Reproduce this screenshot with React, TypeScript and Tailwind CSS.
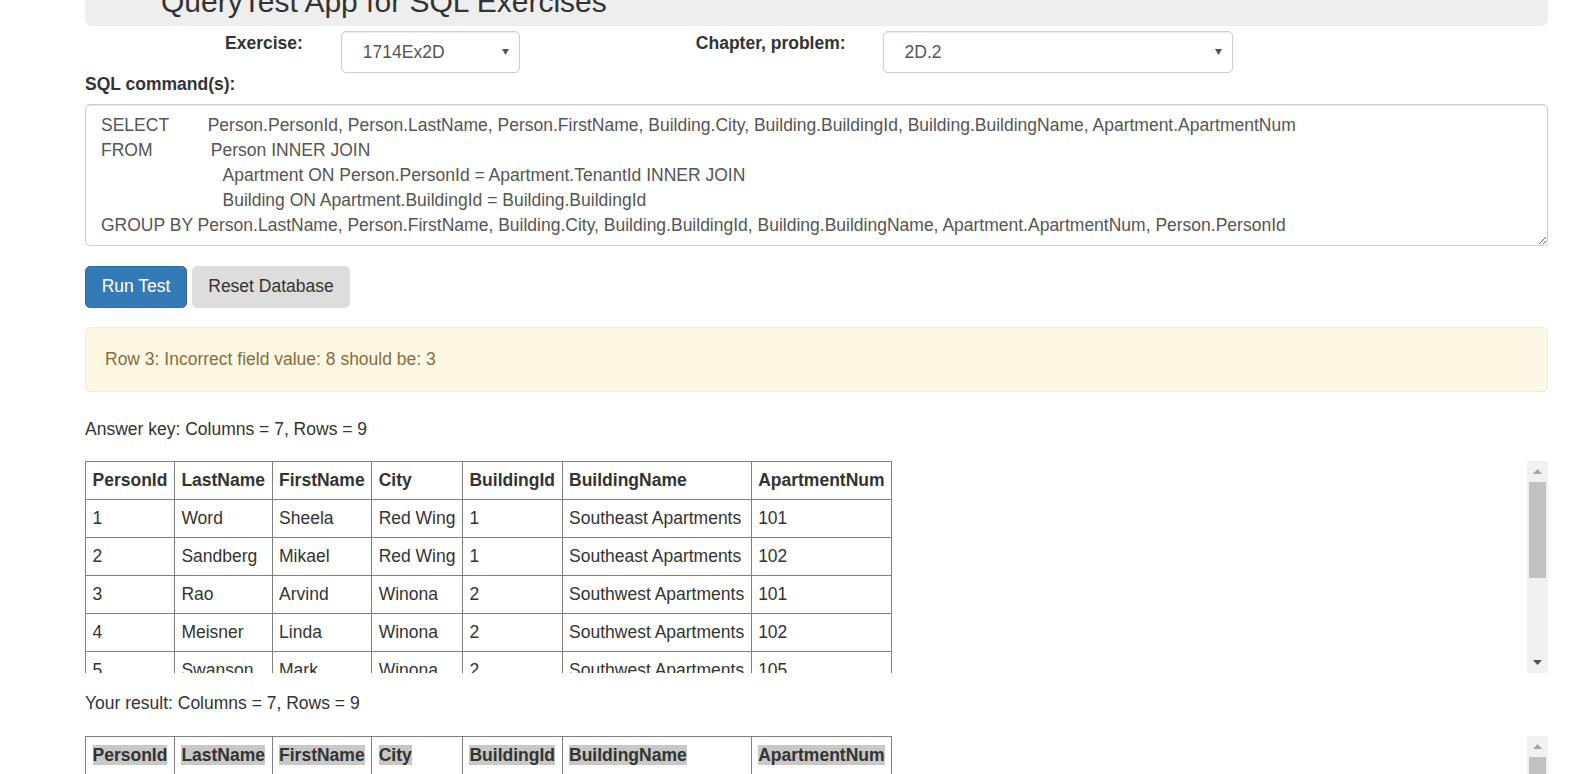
import React from "react"

type Row = [string, string, string, string, string, string, string]

const headers = ["PersonId", "LastName", "FirstName", "City", "BuildingId", "BuildingName", "ApartmentNum"]

const answerRows: Row[] = [
  ["1", "Word", "Sheela", "Red Wing", "1", "Southeast Apartments", "101"],
  ["2", "Sandberg", "Mikael", "Red Wing", "1", "Southeast Apartments", "102"],
  ["3", "Rao", "Arvind", "Winona", "2", "Southwest Apartments", "101"],
  ["4", "Meisner", "Linda", "Winona", "2", "Southwest Apartments", "102"],
  ["5", "Swanson", "Mark", "Winona", "2", "Southwest Apartments", "105"],
  ["6", "Weber", "Anne", "Winona", "2", "Southwest Apartments", "106"],
  ["7", "Nguyen", "Kim", "Red Wing", "1", "Southeast Apartments", "103"],
  ["8", "Olson", "Erik", "Red Wing", "1", "Southeast Apartments", "104"],
  ["9", "Berg", "Lisa", "Winona", "2", "Southwest Apartments", "103"],
]

const resultRows: Row[] = answerRows.map((r, i) => (i === 2 ? (["8", ...r.slice(1)] as Row) : r))

const sql = [
  "SELECT        Person.PersonId, Person.LastName, Person.FirstName, Building.City, Building.BuildingId, Building.BuildingName, Apartment.ApartmentNum",
  "FROM            Person INNER JOIN",
  "                         Apartment ON Person.PersonId = Apartment.TenantId INNER JOIN",
  "                         Building ON Apartment.BuildingId = Building.BuildingId",
  "GROUP BY Person.LastName, Person.FirstName, Building.City, Building.BuildingId, Building.BuildingName, Apartment.ApartmentNum, Person.PersonId",
].join("\n")

function Caret() {
  return (
    <svg width="7" height="6" viewBox="0 0 7 6">
      <path d="M0 0 L7 0 L3.5 6 Z" fill="#555" />
    </svg>
  )
}

function SelectBox({ value, width }: { value: string; width: string }) {
  return (
    <div
      className={`${width} h-[42px] flex items-center justify-between pl-[21px] pr-[10px] bg-white border border-[#ccc] rounded-[5px] shadow-[inset_0_1px_1px_rgba(0,0,0,0.075)] text-[#555]`}
    >
      <span>{value}</span>
      <Caret />
    </div>
  )
}

function Scrollbar({ thumb }: { thumb: string }) {
  return (
    <div className="w-[21px] shrink-0 bg-[#f1f1f1] flex flex-col">
      <div className="h-[21px] flex items-center justify-center">
        <svg width="9" height="5" viewBox="0 0 9 5">
          <path d="M0 5 L9 5 L4.5 0 Z" fill="#a3a3a3" />
        </svg>
      </div>
      <div className={`${thumb} mx-[2px] bg-[#c1c1c1]`} />
      <div className="flex-1" />
      <div className="h-[21px] flex items-center justify-center">
        <svg width="9" height="5" viewBox="0 0 9 5">
          <path d="M0 0 L9 0 L4.5 5 Z" fill="#505050" />
        </svg>
      </div>
    </div>
  )
}

function DataTable({ rows, marked }: { rows: Row[]; marked?: boolean }) {
  return (
    <table className="border-collapse">
      <thead>
        <tr>
          {headers.map((h) => (
            <th key={h} className="border border-[#808080] px-[6.5px] py-[6px] text-left font-bold whitespace-nowrap">
              {marked ? <span className="bg-[#c8c8c8]">{h}</span> : h}
            </th>
          ))}
        </tr>
      </thead>
      <tbody>
        {rows.map((r, i) => (
          <tr key={i}>
            {r.map((c, j) => (
              <td key={j} className="border border-[#808080] px-[6.5px] py-[6px] whitespace-nowrap">
                {c}
              </td>
            ))}
          </tr>
        ))}
      </tbody>
    </table>
  )
}

function ResultBox({ rows, marked, thumb }: { rows: Row[]; marked?: boolean; thumb: string }) {
  return (
    <div className="h-[212px] flex">
      <div className="flex-1 overflow-hidden">
        <DataTable rows={rows} marked={marked} />
      </div>
      <Scrollbar thumb={thumb} />
    </div>
  )
}

export default function App() {
  return (
    <div className="h-[774px] overflow-hidden bg-white font-['Liberation_Sans',Arial,sans-serif] text-[17.5px] leading-[25px] text-[#333]">
      <div className="ml-[85px] mr-[27px]">
        <div className="h-[26px] overflow-hidden bg-[#eee] rounded-b-[7px] pl-[76px]">
          <h1 className="mt-[-13px] text-[30px] leading-[30px] font-normal text-[#333] whitespace-nowrap">
            QueryTest App for SQL Exercises
          </h1>
        </div>

        <div className="mt-[5px] flex items-start">
          <label className="ml-[140px] font-bold">Exercise:</label>
          <div className="ml-[38px]">
            <SelectBox value="1714Ex2D" width="w-[179px]" />
          </div>
          <label className="ml-[176px] font-bold">Chapter, problem:</label>
          <div className="ml-[37px]">
            <SelectBox value="2D.2" width="w-[350px]" />
          </div>
        </div>

        <div className="-mt-[1px] mb-[7px] font-bold">SQL command(s):</div>
        <textarea
          readOnly
          value={sql}
          spellCheck={false}
          className="block w-full h-[142px] px-[15px] py-[7.5px] border border-[#ccc] rounded-[5px] shadow-[inset_0_1px_1px_rgba(0,0,0,0.075)] text-[#555] leading-[25px] outline-none resize-y overflow-hidden"
        />

        <div className="mt-[20px] flex gap-[5px]">
          <button className="w-[102px] h-[42px] pb-[2px] bg-[#337ab7] border border-[#2e6da4] rounded-[5px] text-white">
            Run Test
          </button>
          <button className="w-[158px] h-[42px] pb-[2px] bg-[#ddd] border border-[#ddd] rounded-[5px] text-[#333]">
            Reset Database
          </button>
        </div>

        <div className="mt-[19px] px-[19px] py-[19px] bg-[#fcf8e3] border border-[#faebcc] rounded-[5px] text-[#8a6d3b]">
          Row 3: Incorrect field value: 8 should be: 3
        </div>

        <p className="mt-[25px] mb-[19px]">Answer key: Columns = 7, Rows = 9</p>
        <ResultBox rows={answerRows} thumb="h-[96px]" />

        <p className="mt-[18px] mb-[20px]">Your result: Columns = 7, Rows = 9</p>
        <ResultBox rows={resultRows} marked thumb="h-[96px]" />
      </div>
    </div>
  )
}
